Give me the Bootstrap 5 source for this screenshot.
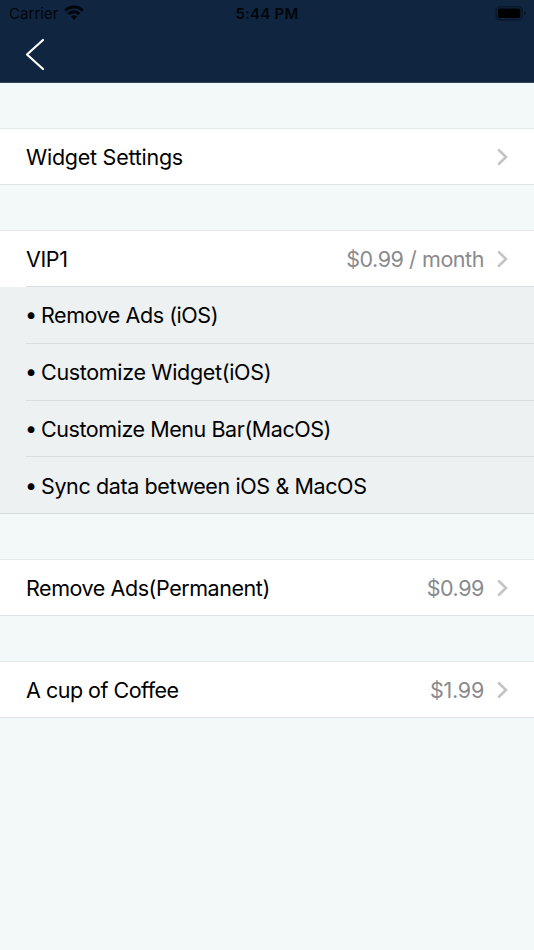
<!DOCTYPE html>
<html lang="en">
<head>
<meta charset="utf-8">
<meta name="viewport" content="width=device-width, initial-scale=1">
<title>Settings</title>
<link href="https://cdn.jsdelivr.net/npm/bootstrap@5.3.0/dist/css/bootstrap.min.css" rel="stylesheet">
<style>
  body { background: #f3f8f9; font-family: Inter, "Liberation Sans", sans-serif; color: #000; min-height: 950px; }
  .topbar { background: #0f2540; height: 83px; border-bottom: 1px solid #34465c; }
  .status { height: 27px; font-size: 15px; line-height: 27px; padding: 0 8px 0 9px; color: #02060b; }
  .status > * { flex: 1 1 0; }
  .carrier { letter-spacing: .05px; }
  .wifi { margin-left: 5px; margin-bottom: 1px; }
  .clock { font-weight: 600; letter-spacing: .25px; padding-right: 1px; }
  .back { margin: 11px 0 0 25px; line-height: 0; }
  .group { margin-top: 45px; }
  .cell-row { height: 57px; padding: 0 26px 1px 26px; font-size: 21.5px; letter-spacing: -.44px; line-height: 56px; background: #fff; border: 0; color: #000; white-space: pre; }
  .group > .cell-row:first-child { box-shadow: inset 0 1px #e4e9ea; padding-top: 1px; padding-bottom: 0; }
  .group > .cell-row:last-child { border-bottom: 1px solid #dee2e4; box-shadow: none; }
  .group > .cell-row:only-child { border-top: 1px solid #e4e9ea; padding-top: 0; }
  .perk { background: #edf1f2; }
  .perk.short { height: 56px; }
  .perk:last-child { padding-top: 1px; padding-bottom: 0; border-bottom-color: #d5dbdd !important; }
  .inset-line { background-image: linear-gradient(#d9dfe0, #d9dfe0); background-size: calc(100% - 26px) 1px; background-position: right bottom; background-repeat: no-repeat; }
  .bullet { display: inline-block; width: 16px; margin-left: -1px; line-height: 1; vertical-align: 1.5px; }
  .price { color: #8a8a8e; margin-right: 13px; }
  .t1 { letter-spacing: -.25px; }
  .t2 { letter-spacing: -.4px; }
  .t4 { letter-spacing: -.33px; }
  .t6 { letter-spacing: -.39px; }
  .t8 { letter-spacing: -.5px; }
  .p3 { letter-spacing: -.25px; }
</style>
</head>
<body>
<header class="topbar">
  <div class="status d-flex">
    <div class="d-flex align-items-center">
      <span class="carrier">Carrier</span>
      <svg class="wifi" width="20" height="16" viewBox="0 0 20 16" fill="none" stroke="#02060b" stroke-width="2.9">
        <path d="M1.3 5.6a12.4 12.4 0 0 1 17.4 0M4.5 9a7.8 7.8 0 0 1 11 0"/>
        <path d="M10 14.7 7.1 11.8a4.1 4.1 0 0 1 5.8 0z" fill="#02060b" stroke="none"/>
      </svg>
    </div>
    <div class="clock text-center">5:44 PM</div>
    <div class="d-flex align-items-center justify-content-end">
      <svg width="31" height="15" viewBox="0 0 31 15">
        <rect x="1.2" y=".8" width="26" height="13" rx="3.6" fill="none" stroke="#091728" stroke-width="1.3"/>
        <rect x="3" y="2.6" width="22.4" height="9.4" rx="1.8" fill="#000"/>
        <path d="M29.2 5.2v4.2q1.6-.6 1.6-2.1t-1.6-2.1z" fill="#091728"/>
      </svg>
    </div>
  </div>
  <div class="back">
    <svg width="20" height="33" viewBox="0 0 20 33" fill="none" stroke="#fff" stroke-width="2.2" stroke-linecap="round" stroke-linejoin="round"><path d="M18 2 2 16.5 18 31"/></svg>
  </div>
</header>

<svg class="d-none"><symbol id="chev" viewBox="0 0 11 18"><path d="M2 2.2 9 9l-7 6.8" fill="none" stroke="#c4c4c7" stroke-width="2.6" stroke-linecap="round"/></symbol></svg>

<main>
  <div class="group list-group list-group-flush">
    <div class="list-group-item cell-row d-flex align-items-center"><span class="me-auto t1">Widget Settings</span><svg width="11" height="18"><use href="#chev"/></svg></div>
  </div>
  <div class="group list-group list-group-flush">
    <div class="list-group-item cell-row inset-line d-flex align-items-center"><span class="me-auto t2">VIP1</span><span class="price">$0.99 / month</span><svg width="11" height="18"><use href="#chev"/></svg></div>
    <div class="list-group-item cell-row perk inset-line"><span class="bullet">•</span><span>Remove Ads (iOS)</span></div>
    <div class="list-group-item cell-row perk inset-line"><span class="bullet">•</span><span class="t4">Customize Widget(iOS)</span></div>
    <div class="list-group-item cell-row perk short inset-line"><span class="bullet">•</span><span>Customize Menu Bar(MacOS)</span></div>
    <div class="list-group-item cell-row perk"><span class="bullet">•</span><span class="t6">Sync data between iOS &amp; MacOS</span></div>
  </div>
  <div class="group list-group list-group-flush">
    <div class="list-group-item cell-row d-flex align-items-center"><span class="me-auto">Remove Ads(Permanent)</span><span class="price">$0.99</span><svg width="11" height="18"><use href="#chev"/></svg></div>
  </div>
  <div class="group list-group list-group-flush">
    <div class="list-group-item cell-row d-flex align-items-center"><span class="me-auto t8">A cup of Coffee</span><span class="price p3">$1.99</span><svg width="11" height="18"><use href="#chev"/></svg></div>
  </div>
</main>
<script src="https://cdn.jsdelivr.net/npm/bootstrap@5.3.0/dist/js/bootstrap.bundle.min.js"></script>
</body>
</html>
